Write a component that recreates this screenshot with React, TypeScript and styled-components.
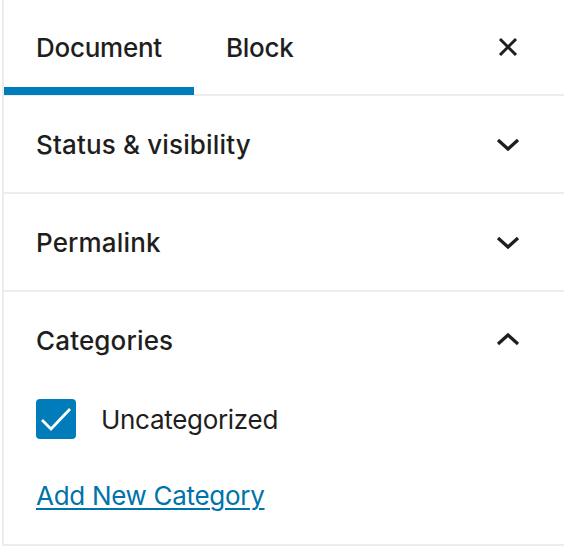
import React from 'react';
import styled, { createGlobalStyle } from 'styled-components';

const GlobalStyle = createGlobalStyle`
  html, body {
    margin: 0;
    padding: 0;
    background: #fff;
  }
  body {
    font-family: Inter, "Noto Sans", "Liberation Sans", sans-serif;
    color: #1e1e1e;
  }
`;

const Sidebar = styled.div`
  margin-left: 2px;
  border-left: 2px solid #ececec;
  border-bottom: 2px solid #ececec;
  background: #fff;
`;

const TabBar = styled.div`
  display: flex;
  align-items: stretch;
  height: 96px;
  box-sizing: border-box;
  border-bottom: 2px solid #ececec;
  padding-right: 44px;
`;

const Tab = styled.button<{ $active?: boolean }>`
  position: relative;
  background: none;
  border: 0;
  margin: 0;
  padding: 0 32px;
  font-family: inherit;
  font-size: 26px;
  font-weight: 500;
  letter-spacing: -0.25px;
  color: #1e1e1e;
  cursor: pointer;

  &::after {
    content: '';
    display: ${(p) => (p.$active ? 'block' : 'none')};
    position: absolute;
    left: 0;
    right: 0;
    bottom: -1px;
    height: 8px;
    background: #007cba;
  }
`;

const Spacer = styled.div`
  flex: 1;
`;

const IconButton = styled.button`
  display: flex;
  align-items: center;
  justify-content: center;
  width: 24px;
  padding: 0;
  background: none;
  border: 0;
  color: #1e1e1e;
  cursor: pointer;
`;

const Panel = styled.section<{ $last?: boolean }>`
  border-bottom: ${(p) => (p.$last ? '0' : '2px solid #ececec')};
`;

const PanelHeader = styled.div`
  display: flex;
  align-items: center;
  justify-content: space-between;
  height: 96px;
  padding: 0 44px 0 32px;
`;

const PanelTitle = styled.h2`
  margin: 0;
  font-size: 26px;
  font-weight: 500;
  letter-spacing: 0.15px;
  color: #1e1e1e;
`;

const PanelBody = styled.div`
  display: flex;
  flex-direction: column;
  align-items: flex-start;
  padding: 11px 32px 30px;
  gap: 39px;
`;

const CheckRow = styled.label`
  display: flex;
  align-items: center;
  gap: 25px;
  font-size: 26px;
  font-weight: 400;
  letter-spacing: -0.3px;
  color: #1e1e1e;
`;

const CheckBox = styled.span`
  display: flex;
  align-items: center;
  justify-content: center;
  width: 40px;
  height: 40px;
  border-radius: 4px;
  background: #007cba;
`;

const LinkButton = styled.a`
  font-size: 26px;
  line-height: 36px;
  letter-spacing: -0.3px;
  color: #0073aa;
  text-decoration: underline;
  text-underline-offset: 3px;
  text-decoration-thickness: 2px;
`;

const Chevron = ({ up }: { up?: boolean }) => (
  <svg width="24" height="16" viewBox="0 0 24 16">
    <polyline
      points={up ? '2,12 12,3 22,12' : '2,4 12,13 22,4'}
      fill="none"
      stroke="currentColor"
      strokeWidth="3.2"
    />
  </svg>
);

const CloseIcon = () => (
  <svg width="20" height="20" viewBox="0 0 20 20">
    <path d="M2 2 L18 18 M18 2 L2 18" stroke="currentColor" strokeWidth="3" fill="none" />
  </svg>
);

const CheckMark = () => (
  <svg width="34" height="34" viewBox="0 0 34 34">
    <polyline points="3,18 12,27 31,7" fill="none" stroke="#fff" strokeWidth="2.8" />
  </svg>
);

const panels = [
  { title: 'Status & visibility' },
  { title: 'Permalink' },
];

export default function App() {
  return (
    <>
      <GlobalStyle />
      <Sidebar>
        <TabBar>
          <Tab $active>Document</Tab>
          <Tab>Block</Tab>
          <Spacer />
          <IconButton aria-label="Close settings">
            <CloseIcon />
          </IconButton>
        </TabBar>
        {panels.map((p) => (
          <Panel key={p.title}>
            <PanelHeader>
              <PanelTitle>{p.title}</PanelTitle>
              <IconButton>
                <Chevron />
              </IconButton>
            </PanelHeader>
          </Panel>
        ))}
        <Panel $last>
          <PanelHeader>
            <PanelTitle>Categories</PanelTitle>
            <IconButton>
              <Chevron up />
            </IconButton>
          </PanelHeader>
          <PanelBody>
            <CheckRow>
              <CheckBox>
                <CheckMark />
              </CheckBox>
              Uncategorized
            </CheckRow>
            <LinkButton href="#">Add New Category</LinkButton>
          </PanelBody>
        </Panel>
      </Sidebar>
    </>
  );
}
